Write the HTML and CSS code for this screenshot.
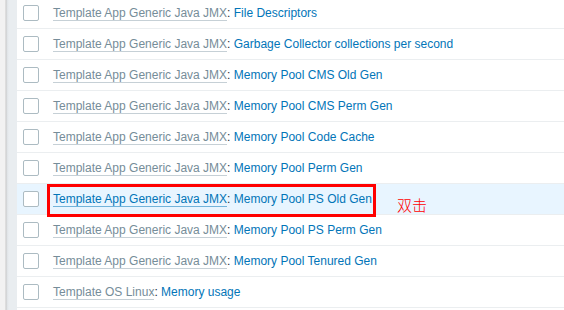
FILE: index.html
```html
<!DOCTYPE html>
<html lang="en">
  <head>
    <meta charset="UTF-8" />
    <title>Items</title>
    <link rel="stylesheet" href="styles.css">
  </head>
  <body>
    <div class="page">
      <div class="side"></div>
      <div class="list">
        <div class="row">
          <span class="check"></span>
          <span class="name"><a class="tpl">Template App Generic Java JMX</a>: <a class="item">File Descriptors</a></span>
        </div>
        <div class="row">
          <span class="check"></span>
          <span class="name"><a class="tpl">Template App Generic Java JMX</a>: <a class="item">Garbage Collector collections per second</a></span>
        </div>
        <div class="row">
          <span class="check"></span>
          <span class="name"><a class="tpl">Template App Generic Java JMX</a>: <a class="item">Memory Pool CMS Old Gen</a></span>
        </div>
        <div class="row">
          <span class="check"></span>
          <span class="name"><a class="tpl">Template App Generic Java JMX</a>: <a class="item">Memory Pool CMS Perm Gen</a></span>
        </div>
        <div class="row">
          <span class="check"></span>
          <span class="name"><a class="tpl">Template App Generic Java JMX</a>: <a class="item">Memory Pool Code Cache</a></span>
        </div>
        <div class="row">
          <span class="check"></span>
          <span class="name"><a class="tpl">Template App Generic Java JMX</a>: <a class="item">Memory Pool Perm Gen</a></span>
        </div>
        <div class="row hover">
          <span class="check"></span>
          <span class="name"><a class="tpl">Template App Generic Java JMX</a>: <a class="item">Memory Pool PS Old Gen</a></span>
          <span class="mark"></span>
          <span class="note">双击</span>
        </div>
        <div class="row">
          <span class="check"></span>
          <span class="name"><a class="tpl">Template App Generic Java JMX</a>: <a class="item">Memory Pool PS Perm Gen</a></span>
        </div>
        <div class="row">
          <span class="check"></span>
          <span class="name"><a class="tpl">Template App Generic Java JMX</a>: <a class="item">Memory Pool Tenured Gen</a></span>
        </div>
        <div class="row">
          <span class="check"></span>
          <span class="name"><a class="tpl">Template OS Linux</a>: <a class="item">Memory usage</a></span>
        </div>
      </div>
    </div>
  </body>
</html>
```

FILE: styles.css
```css
/* Page */
body {
  margin: 0;
  overflow: hidden;
  font-family: "Liberation Sans", Arial, sans-serif;
  font-size: 12px;
  background: #ffffff;
}

.page {
  display: flex;
  height: 310px;
}

/* Grey strip at the left (sidebar edge) */
.side {
  width: 17px;
  flex: none;
  background:
    linear-gradient(to right, #f2f2f2 0, #f2f2f2 5px, #c8c8c8 6px, #dfe3e6 7px, #e9edf0 9px, #e9edf0 17px);
}

/* Item list */
.list {
  flex: 1;
  margin-top: -2px;
}

.row {
  position: relative;
  display: flex;
  align-items: center;
  height: 30px;
  border-bottom: 1px solid #ebeef0;
  padding-left: 6px;
}

.row.hover {
  background: #e8f5ff;
}

.check {
  width: 14px;
  height: 14px;
  border: 1px solid #acbbc2;
  border-radius: 2px;
  background: #ffffff;
  margin-right: 14px;
  flex: none;
}

.name {
  color: #1f2c33;
  white-space: nowrap;
}

.tpl {
  color: #768d99;
  border-bottom: 1px solid #c6d0d6;
}

.row.hover .tpl {
  color: #0275b8;
  border-bottom-color: #71b3da;
}

.item {
  color: #0275b8;
}

/* Annotation over the row */
.mark {
  position: absolute;
  left: 30px;
  top: 0;
  width: 323px;
  height: 27px;
  border: 3px solid #ff0000;
}

.note {
  position: absolute;
  left: 380px;
  top: 12px;
  color: #ff0000;
  font-family: "Noto Sans CJK SC", sans-serif;
  font-weight: 300;
  font-size: 15px;
  line-height: 18px;
}
```
